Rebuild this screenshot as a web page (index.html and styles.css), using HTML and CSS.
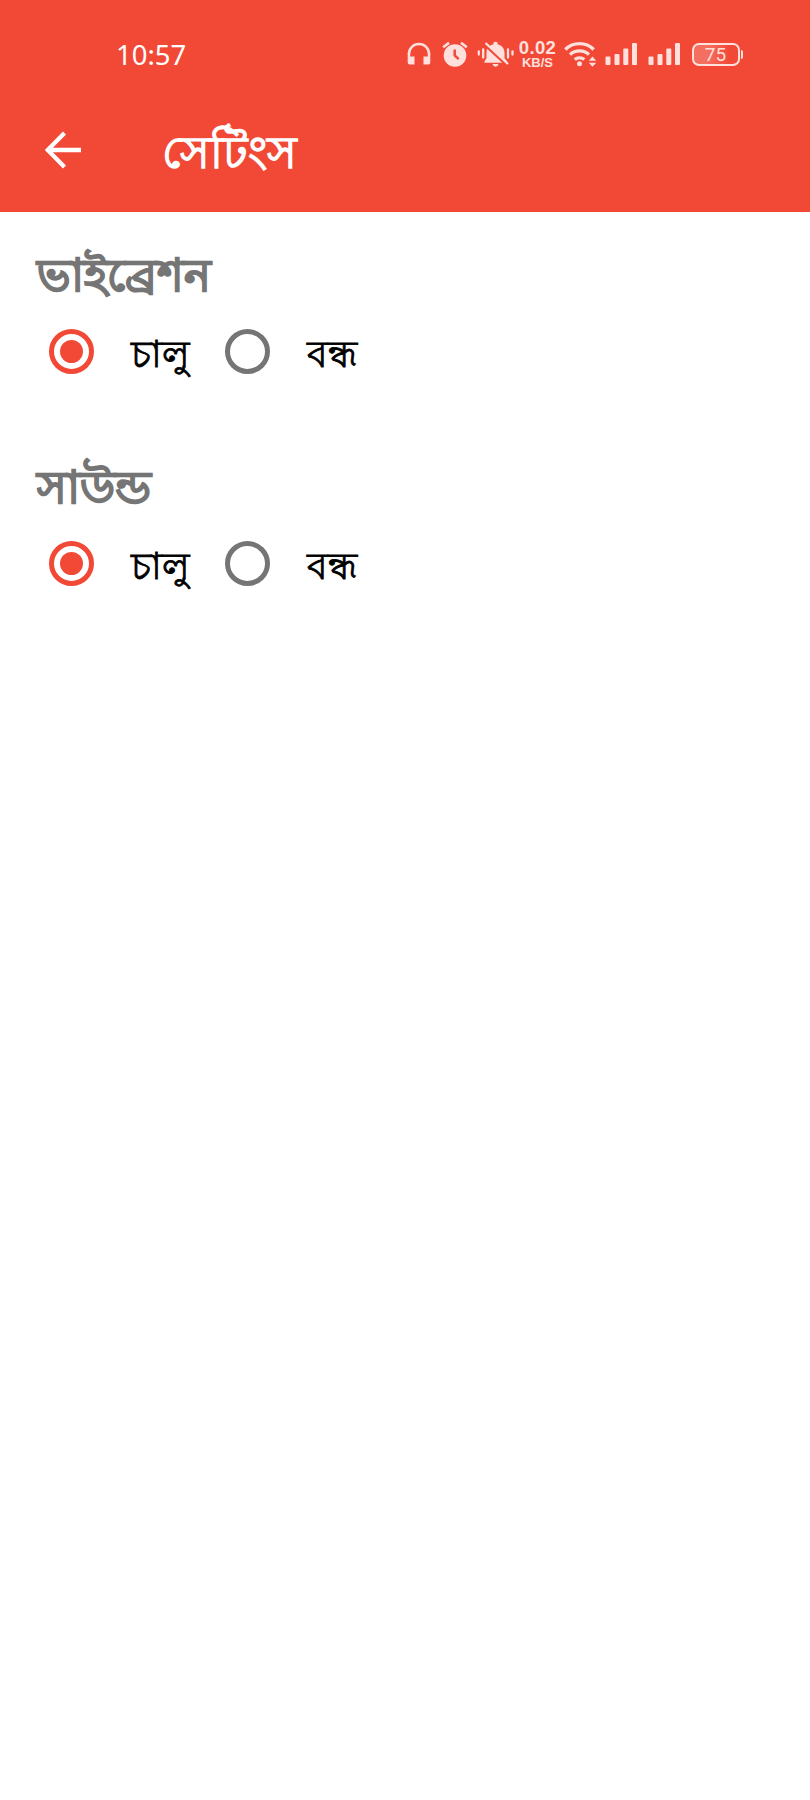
FILE: index.html
```
<!DOCTYPE html>
<html lang="bn">
<head>
<meta charset="utf-8">
<title>সেটিংস</title>
<link rel="stylesheet" href="styles.css">
</head>
<body>
<header class="header">
  <div class="status">
    <span class="clock">10:57</span>
    <div class="indicators">
      <svg class="headphones" width="24" height="26" viewBox="0 0 24 26"><path d="M2 13v-.500a10 9.500 0 0 1 20 0v.5" fill="none" stroke="currentColor" stroke-width="2.500"/><path d="M.7 12h2.500v3.500H7.500V23.500H2.700a2 2 0 0 1-2-2zM23.300 12h-2.500v3.500H16.500V23.500h4.800a2 2 0 0 0 2-2z" fill="currentColor"/></svg>
      <svg class="alarm" width="26" height="26" viewBox="0 0 26 26"><circle cx="13" cy="14.500" r="11.300" fill="currentColor"/><path d="M1.200 6.300 7 1.800M24.800 6.300 19 1.800" stroke="currentColor" stroke-width="2.700"/><path d="M12.700 8.500v6l4 3.700" fill="none" stroke="#f24937" stroke-width="2.500"/></svg>
      <svg class="bell" width="38" height="26" viewBox="0 0 38 26"><path d="M1.800 10.500v3M6.200 8.500v8M31 8.500v8M35.500 10.500v3" stroke="currentColor" stroke-width="2.300" stroke-linecap="round"/><path d="M16.500 3.200V1.500q2-1.500 4 0v1.700c4.500 1 7 4.300 7 8.500v5.500l2.500 3v1.500H7.500v-1.500l2-3v-5.500c0-4.200 2.500-7.500 7-8.500zM15.500 23h6q-.5 2.700-3 2.700t-3-2.700z" fill="currentColor"/><path d="m8 4 23 21" stroke="#f24937" stroke-width="3"/><path d="m8.500 2 22.500 21" stroke="currentColor" stroke-width="2.300"/></svg>
      <div class="speed"><span class="speed-value">0.02</span><span class="speed-unit">KB/S</span></div>
      <svg class="wifi" width="34" height="26" viewBox="0 0 34 26"><path d="M1.300 8.500a20 20 0 0 1 28.400 0M6 13.600a14 14 0 0 1 19 0M10.700 18.600a7.500 7.500 0 0 1 9.600 0" fill="none" stroke="currentColor" stroke-width="3.300"/><circle cx="15.500" cy="22.800" r="2.500" fill="currentColor"/><path d="m28.500 15.500 3.700 4.300h-7.400zM28.500 25.700l3.700-4h-7.400z" fill="currentColor"/></svg>
      <svg class="signal-a" width="33" height="26" viewBox="0 0 33 26"><g fill="currentColor"><rect x=".5" y="15.500" width="5" height="8.500" rx="1"/><rect x="9.500" y="13" width="5" height="11" rx="1"/><rect x="18.300" y="7.500" width="5" height="16.500" rx="1"/><rect x="27" y="2" width="5" height="22" rx="1"/></g></svg>
      <svg class="signal-b" width="33" height="26" viewBox="0 0 33 26"><g fill="currentColor"><rect x=".5" y="15.500" width="5" height="8.500" rx="1"/><rect x="9.500" y="13" width="5" height="11" rx="1"/><rect x="18.300" y="7.500" width="5" height="16.500" rx="1"/><rect x="27" y="2" width="5" height="22" rx="1"/></g></svg>
      <div class="battery"><span class="battery-body">75</span><span class="battery-tip"></span></div>
    </div>
  </div>
  <div class="toolbar">
    <svg class="back" width="38" height="38" viewBox="0 0 38 38"><path d="M36 19H3M19.500 2 2.700 19l16.800 17" fill="none" stroke="#fff" stroke-width="4.300"/></svg>
    <h1 class="title">সেটিংস</h1>
  </div>
</header>
<main class="settings">
  <section class="group">
    <h2 class="heading">ভাইব্রেশন</h2>
    <div class="options">
      <label class="option"><span class="radio radio-on"></span><span class="label">চালু</span></label>
      <label class="option"><span class="radio"></span><span class="label">বন্ধ</span></label>
    </div>
  </section>
  <section class="group">
    <h2 class="heading">সাউন্ড</h2>
    <div class="options">
      <label class="option"><span class="radio radio-on"></span><span class="label">চালু</span></label>
      <label class="option"><span class="radio"></span><span class="label">বন্ধ</span></label>
    </div>
  </section>
</main>
</body>
</html>
```
FILE: styles.css
```
* { box-sizing: border-box; }
body { margin: 0; min-height: 1800px; background: #fff; font-family: "Noto Sans", sans-serif; }
svg { display: block; flex: none; }
.header { height: 212px; background: #f24937; color: #fff; }
.status { display: flex; height: 108px; padding-left: 116px; }
.clock { width: 290.5px; padding-top: 34.5px; font-size: 27.5px; line-height: 40px; }
.indicators { display: flex; align-items: flex-start; padding-top: 41px; color: #ffe0dc; }
.headphones { margin-right: 11px; }
.alarm { margin-right: 9px; }
.bell { margin-right: 3px; }
.speed { display: flex; flex-direction: column; align-items: center; width: 40px; margin-right: 6px; font-family: "Liberation Sans", sans-serif; font-weight: 700; white-space: nowrap; }
.speed-value { font-size: 18.5px; line-height: 14px; letter-spacing: 0.4px; }
.speed-unit { font-size: 13px; line-height: 15px; }
.wifi { margin-right: 7px; }
.signal-a { margin-right: 10px; }
.signal-b { margin-right: 11px; }
.battery { display: flex; align-items: center; gap: 1px; margin-top: 2px; }
.battery-body { width: 48px; height: 23px; border: 2px solid currentColor; border-radius: 7px; background: linear-gradient(90deg, #f56f60 30%, #f24937 80%); font: 400 19px/20px Roboto, sans-serif; text-align: center; }
.battery-tip { width: 2px; height: 9px; border-radius: 0 2px 2px 0; background: currentColor; }
.toolbar { display: flex; align-items: center; height: 84px; padding-left: 44.5px; }
.back { margin: 0 79.5px 1px 0; }
.title { margin: 0; padding-top: 2px; font-size: 44.5px; line-height: 60px; font-weight: 500; -webkit-text-stroke: 1.5px #fff; }
.settings { padding: 27px 37px; }
.group { height: 212px; }
.heading { margin: 0; height: 67px; padding-top: 1px; font-size: 45px; line-height: 67px; font-weight: 400; color: #757575; -webkit-text-stroke: 2.4px #757575; }
.options { display: flex; height: 90px; }
.option { display: flex; align-items: center; width: 175.5px; padding-left: 12px; }
.radio { display: flex; align-items: center; justify-content: center; width: 45px; height: 45px; margin-right: 37px; border: 5px solid #757575; border-radius: 50%; }
.radio-on { border-color: #f24937; }
.radio-on::after { content: ""; width: 23px; height: 23px; border-radius: 50%; background: #f24937; }
.label { padding-top: 3px; font-size: 36.5px; line-height: 50px; color: #000; -webkit-text-stroke: 0.8px #000; }
```
